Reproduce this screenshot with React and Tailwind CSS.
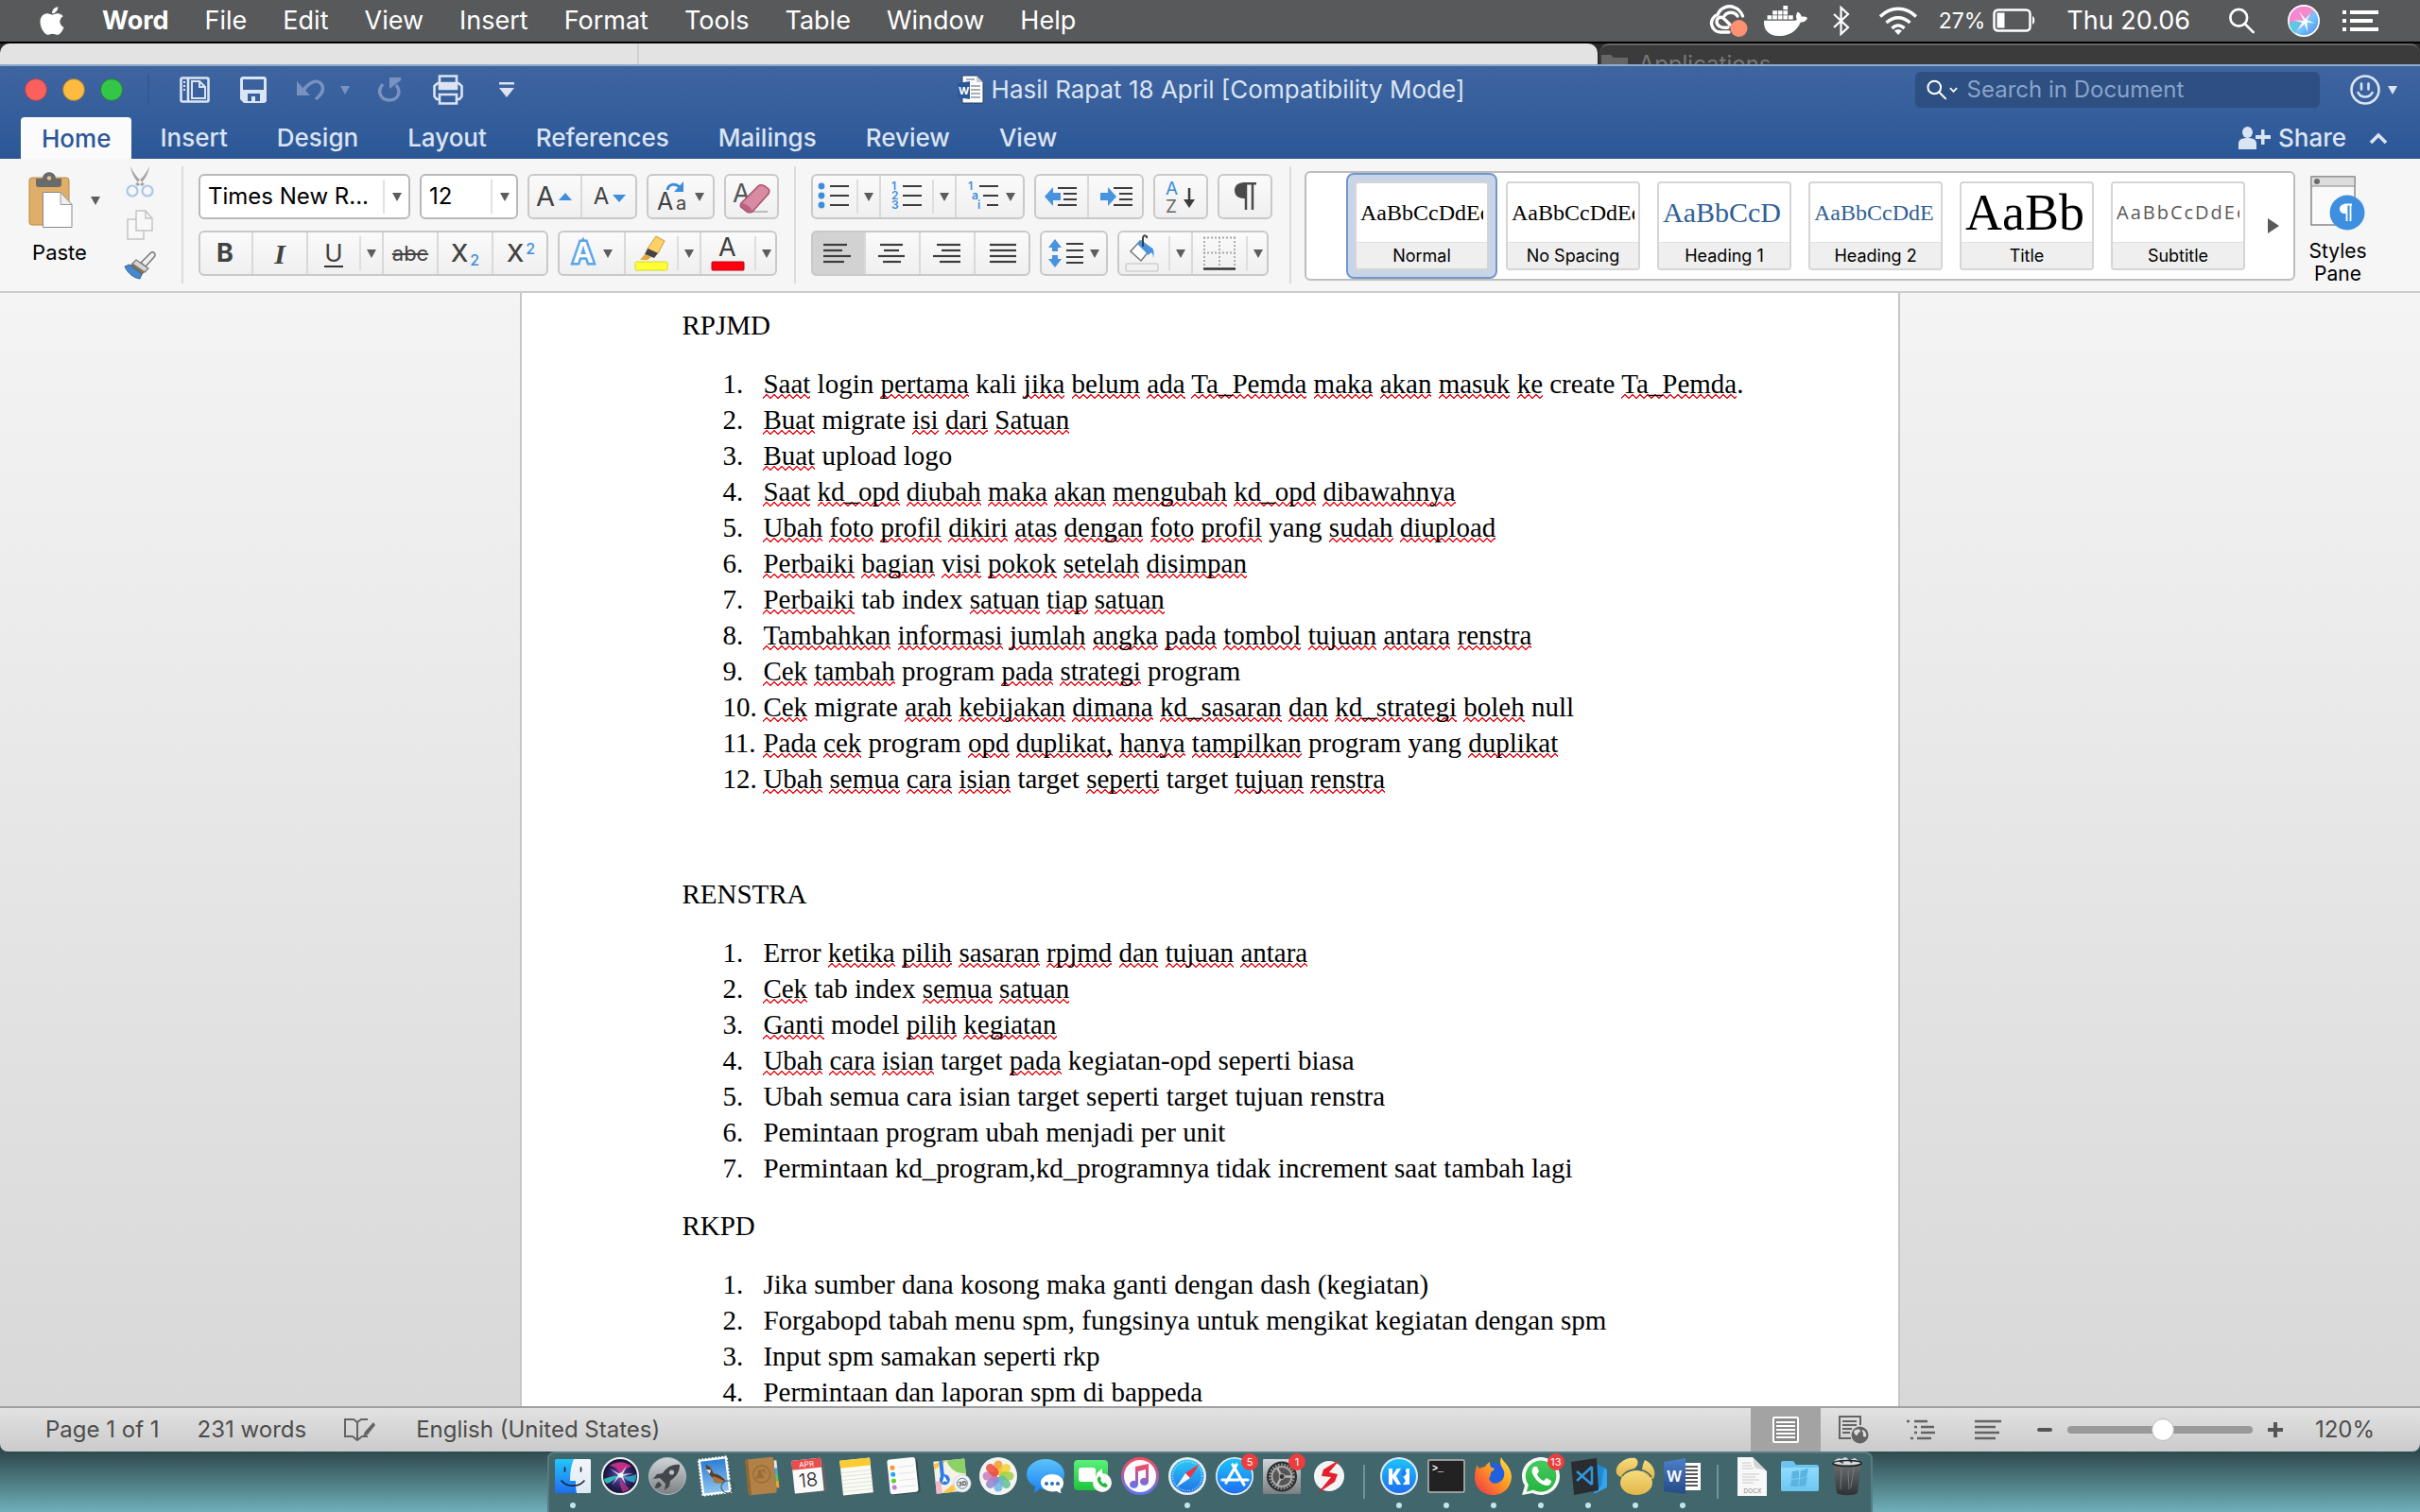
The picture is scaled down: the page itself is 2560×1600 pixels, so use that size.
import React from "react";
import { FaApple, FaDocker } from "react-icons/fa";

const UI = "font-['Inter','Liberation_Sans',sans-serif]";
const SERIF = "font-['Liberation_Serif',serif]";

/* ---------- macOS menu bar ---------- */

const menus = ["File", "Edit", "View", "Insert", "Format", "Tools", "Table", "Window", "Help"];

function CloudIcon() {
  return (
    <svg viewBox="0 0 42 36" className="h-9 w-[42px]" fill="none" stroke="#fff" strokeWidth="3.4" strokeLinecap="round">
      <path d="M21 30H12A9.500 9.500 0 0 1 9 11.500C12 4 20 1 27 4c4 1.500 7 5 8.500 9" />
      <path d="M20 25c-6 1-12-1-12-6 0-4 4-6 7-4l7 7" />
      <path d="M16 13c3-5 11-5 14 0" />
      <circle cx="31.500" cy="26" r="9" fill="#ff9173" stroke="none" />
    </svg>
  );
}

function BluetoothIcon() {
  return (
    <svg viewBox="0 0 20 32" className="h-8 w-5" fill="none" stroke="#fff" strokeWidth="2.200">
      <path d="M2 9l15 14-7.500 7V2L17 9 2 23" />
    </svg>
  );
}

function WifiIcon() {
  return (
    <svg viewBox="0 0 42 30" className="h-[30px] w-[42px]" fill="none" stroke="#fff" strokeWidth="3.400">
      <path d="M2 10.500c11-11 27-11 38 0M8.500 17c7.500-7 17.500-7 25 0M14.500 23c4-4 9-4 13 0" />
      <path d="M17 25.500l4 4.500 4-4.500c-2.500-2-5.500-2-8 0z" fill="#fff" stroke="none" />
    </svg>
  );
}

function BatteryIcon() {
  return (
    <svg viewBox="0 0 46 26" className="h-[26px] w-[46px]">
      <rect x="1.500" y="1.500" width="38" height="22" rx="4" fill="none" stroke="#fff" strokeWidth="2.500" />
      <rect x="4.500" y="4.500" width="8" height="16" fill="#fff" />
      <path d="M42 8c3 1 3 8 0 9z" fill="#fff" />
    </svg>
  );
}

function SiriLight({ className }) {
  return (
    <svg viewBox="0 0 40 40" className={className}>
      <defs>
        <linearGradient id="siriL" x1="0" y1="0" x2="1" y2="1">
          <stop offset="0" stopColor="#d98bea" />
          <stop offset=".4" stopColor="#ff86c4" />
          <stop offset=".6" stopColor="#6fc6ff" />
          <stop offset="1" stopColor="#5a7be8" />
        </linearGradient>
      </defs>
      <circle cx="20" cy="20" r="19" fill="url(#siriL)" stroke="#fff" strokeWidth="2" />
      <path d="M2 22c8-2 12-3 18-2-5 4-8 9-10 16C5 33 2 28 2 22z" fill="#3fd3e8" opacity=".8" />
      <path d="M20 20l-6-12 8 10 7-8-5 9 10 4-10-1 1 12-4-10-9 8 6-10-11-3z" fill="#fff" opacity=".95" />
    </svg>
  );
}

function SiriDark({ className }) {
  return (
    <svg viewBox="0 0 40 40" className={className}>
      <defs>
        <radialGradient id="siriD" cx=".5" cy=".5" r=".5">
          <stop offset="0" stopColor="#6a4fb8" />
          <stop offset=".6" stopColor="#2b2460" />
          <stop offset="1" stopColor="#140f2e" />
        </radialGradient>
      </defs>
      <circle cx="20" cy="20" r="19" fill="url(#siriD)" stroke="#f1f1f5" strokeWidth="2" />
      <path d="M9 9C16 4 26 4 32 10c-5 1-9 4-11 9-2-5-6-9-12-10z" fill="#d8308a" opacity=".85" />
      <path d="M3 23c6-2 11-4 17-3-5 2-8 6-14 8-2-1-3-3-3-5z" fill="#2fd0c4" opacity=".85" />
      <path d="M22 20c6 1 10 0 15-2 0 4 0 6-2 9-5-1-9-3-13-7z" fill="#2fb6d8" opacity=".8" />
      <path d="M20 21c-1 6 0 11 3 16 3-1 5-2 7-4-5-3-8-7-10-12z" fill="#c8368f" opacity=".7" />
      <path d="M20 20l-9 10 7-11-9-7 11 6 7-9-4 9 11-1-11 3 3 9z" fill="#e9f6ff" opacity=".85" />
      <circle cx="20.500" cy="19" r="2.600" fill="#fff" />
    </svg>
  );
}

function Magnifier({ className }) {
  return (
    <svg viewBox="0 0 30 30" className={className} fill="none" stroke="currentColor" strokeWidth="2.800" strokeLinecap="round">
      <circle cx="11.500" cy="11.500" r="9.500" />
      <path d="M18.500 18.500L28 28" />
    </svg>
  );
}

function MenuBar() {
  return (
    <header className="flex h-[46px] shrink-0 items-center border-b-2 border-black bg-[#57595b] pl-10 pr-[44px] text-[27px] text-white">
      <button type="button" aria-label="Apple menu" className="mr-[38px] flex w-[30px] justify-center">
        <FaApple className="h-[34px] w-[34px]" />
      </button>
      <nav className="flex items-center gap-[38px]">
        <button type="button" className="font-bold">Word</button>
        {menus.map((m) => (
          <button type="button" key={m}>{m}</button>
        ))}
      </nav>
      <div className="ml-auto flex items-center">
        <CloudIcon />
        <FaDocker className="ml-4 h-10 w-[46px]" />
        <span className="ml-[26px]"><BluetoothIcon /></span>
        <span className="ml-[29px]"><WifiIcon /></span>
        <span className="ml-[22px] text-[23px]">27%</span>
        <span className="ml-2"><BatteryIcon /></span>
        <span className="ml-[32px]">Thu 20.06</span>
        <Magnifier className="ml-[40px] h-7 w-[29px]" />
        <SiriLight className="ml-[34px] h-[34px] w-[34px]" />
        <svg viewBox="0 0 38 22" className="ml-[24px] h-[22px] w-[38px]" fill="#fff">
          <path d="M0 0h4v4H0zM8 0h30v4H8zM0 9h4v4H0zM8 9h24v4H8zM0 18h4v4H0zM8 18h30v4H8z" />
        </svg>
      </div>
    </header>
  );
}

function BackgroundWindows() {
  return (
    <div className="flex h-[22px] shrink-0 overflow-hidden bg-[#2b2b2b]">
      <div className="flex w-[66%] rounded-t-[10px] bg-[#e3e3e3]">
        <div className="w-[40%] border-r-2 border-[#d0d0d0]" />
      </div>
      <div className="ml-0.5 flex flex-1 items-start gap-3 rounded-t-[10px] border-t-2 border-[#666] bg-[#3b3b3b] pl-0.5 pt-1.5 text-[24px] leading-[28px] text-[#777]">
        <svg viewBox="0 0 28 22" className="mt-0.5 h-[22px] w-7 fill-[#666]"><path d="M0 2h10l3 3h15v17H0z" /></svg>
        <span>Applications</span>
      </div>
    </div>
  );
}

/* ---------- Word title bar ---------- */

function Caret({ className = "fill-[#5d5d5d]" }) {
  return (
    <svg viewBox="0 0 10 9" className={`h-[9px] w-[10px] shrink-0 ${className}`}>
      <path d="M0 0h10L5 9z" />
    </svg>
  );
}

function TitleBar() {
  return (
    <div className="grid grid-cols-[1fr_auto_1fr] items-center pl-[26px] pr-6 pt-1.5 text-[#dbe4f2]">
      <div className="flex items-center">
        <div className="flex gap-4">
          <button type="button" aria-label="Close" className="h-6 w-6 rounded-full border border-[#a8474f] bg-[#fc605c]" />
          <button type="button" aria-label="Minimize" className="h-6 w-6 rounded-full border border-[#9a7a3c] bg-[#fdbc40]" />
          <button type="button" aria-label="Zoom" className="h-6 w-6 rounded-full border border-[#24803c] bg-[#33c748]" />
        </div>
        <div className="ml-[26px] h-8 w-0.5 bg-[#355a92]" />
        <button type="button" aria-label="Sidebar" className="ml-8">
          <svg viewBox="0 0 32 28" className="h-7 w-8" fill="none" stroke="currentColor" strokeWidth="2.600">
            <rect x="1.500" y="1.500" width="29" height="25" rx="1.500" />
            <path d="M9 2v24" />
            <path d="M5 5v12" strokeWidth="2" strokeDasharray="2 2" />
            <path d="M13 5h8l6 6v12H13zM21 5v6h6" strokeWidth="2" />
          </svg>
        </button>
        <button type="button" aria-label="Save" className="ml-8">
          <svg viewBox="0 0 28 28" className="h-7 w-7">
            <path fill="currentColor" fillRule="evenodd" d="M2 0h24l2 2v24l-2 2H4l-4-4V2zm1 3v11h22V3zM8 18v8h4v-5h4v5h5v-8z" />
          </svg>
        </button>
        <button type="button" aria-label="Undo" className="ml-8 text-[#7893c0]">
          <svg viewBox="0 0 30 24" className="h-6 w-[30px]" fill="none" stroke="currentColor" strokeWidth="3.400">
            <path d="M6 14C14 2 22 1 26 6c4 6-1 12-6 16" />
            <path d="M0 3v15h14z" fill="currentColor" stroke="none" />
          </svg>
        </button>
        <Caret className="ml-4 fill-[#7893c0]" />
        <button type="button" aria-label="Repeat" className="ml-[30px] text-[#7893c0]">
          <svg viewBox="0 0 24 26" className="h-[26px] w-6" fill="none" stroke="currentColor" strokeWidth="3.400">
            <path d="M5 7C-2 15 3 24 12 24c9 0 13-9 7-16" />
            <path d="M12 0h12v3l-12 9z" fill="currentColor" stroke="none" />
          </svg>
        </button>
        <button type="button" aria-label="Print" className="ml-[34px]">
          <svg viewBox="0 0 32 32" className="h-8 w-8" fill="none" stroke="currentColor" strokeWidth="2.600">
            <path d="M7 10V1.500h18V10" />
            <path d="M7 26H4l-2.500-3V12L5 9h22l3.500 3v11L28 26h-3" />
            <path d="M7 10h18v5H7z" fill="currentColor" />
            <path d="M7 21h18v9.500H7z" />
          </svg>
        </button>
        <button type="button" aria-label="Customize toolbar" className="ml-[38px]">
          <svg viewBox="0 0 16 16" className="h-4 w-4 fill-current"><path d="M0 0h16v2.500H0zM0 6h16l-8 10z" /></svg>
        </button>
      </div>
      <h1 className="flex items-center gap-2 text-[26px] leading-8">
        <svg viewBox="0 0 28 32" className="h-8 w-7">
          <path d="M5 1h15l7 7v22H5z" fill="#fff" stroke="#2a3f66" />
          <path d="M20 1v7h7z" fill="#c8cdd6" />
          <path d="M14 12h10M14 16h10M14 20h10M14 24h10M9 5h9" stroke="#8b93a3" strokeWidth="1.500" />
          <path d="M0 9l13-2v19L0 24z" fill="#2b5797" />
          <text x="1" y="21" fontSize="11" fontWeight="700" fill="#fff" fontFamily="Inter">W</text>
        </svg>
        Hasil Rapat 18 April [Compatibility Mode]
      </h1>
      <div className="flex items-center justify-end">
        <label className="flex h-[38px] w-[428px] items-center rounded-md bg-[#2d4f81] pl-3 text-white">
          <Magnifier className="h-[22px] w-6" />
          <svg viewBox="0 0 10 6" className="ml-0.5 h-1.5 w-2.5" fill="none" stroke="#fff" strokeWidth="2"><path d="M1 1l4 4 4-4" /></svg>
          <input aria-label="Search in Document" placeholder="Search in Document" className="ml-2.5 w-full bg-transparent text-[24px] outline-none placeholder:text-[#8aa3cb]" />
        </label>
        <button type="button" aria-label="Feedback" className="ml-8 flex items-center gap-2">
          <svg viewBox="0 0 32 32" className="h-8 w-8" fill="none" stroke="currentColor" strokeWidth="2.600" strokeLinecap="round">
            <circle cx="16" cy="16" r="14.500" />
            <path d="M12 9.500v6M19.500 9.500v6M8.500 19c3 6 12 6 15 0" />
          </svg>
          <Caret className="fill-[#dbe4f2]" />
        </button>
      </div>
    </div>
  );
}

const tabs = ["Insert", "Design", "Layout", "References", "Mailings", "Review", "View"];

function TabRow() {
  return (
    <div className="mt-auto flex h-11 items-stretch justify-between border-b border-[#264f8b] pl-[22px] pr-[34px] text-[26px] font-medium text-[#dbe4f2]">
      <nav className="flex gap-2">
        <button type="button" className="-mb-px rounded-t bg-[#fbfbfb] px-[22px] text-[#2b5797]">Home</button>
        {tabs.map((t) => (
          <button type="button" key={t} className="px-[22px]">{t}</button>
        ))}
      </nav>
      <div className="flex items-center gap-6">
        <button type="button" className="flex items-center gap-2">
          <svg viewBox="0 0 34 24" className="h-6 w-[34px] fill-current">
            <ellipse cx="9.500" cy="6" rx="5.500" ry="6" />
            <path d="M0 24v-6c0-4 3-6 9.500-6s9.500 2 9.500 6v6zM24 3h3.500v6H34v4h-6.500v6H24v-6h-6V9h6z" />
          </svg>
          Share
        </button>
        <button type="button" aria-label="Collapse ribbon">
          <svg viewBox="0 0 20 12" className="h-3 w-5" fill="none" stroke="currentColor" strokeWidth="3.600"><path d="M2 11l8-8 8 8" /></svg>
        </button>
      </div>
    </div>
  );
}

/* ---------- Ribbon ---------- */

function Group({ children }) {
  return (
    <div className="flex h-12 items-stretch divide-x-2 divide-[#d9d9d9] rounded-md bg-gradient-to-b from-[#fbfbfb] to-[#efefef] text-[#424242] outline-2 -outline-offset-2 outline-[#c9c9c9]">
      {children}
    </div>
  );
}

function Btn({ label, children, wide, active }) {
  return (
    <button
      type="button"
      aria-label={label}
      className={`flex items-center justify-center gap-1.5 ${wide ? "w-[72px]" : "w-[58px]"} ${active ? "rounded-l-md bg-[#d2d2d2]" : ""}`}
    >
      {children}
      {wide && <Caret />}
    </button>
  );
}

function SplitBtn({ label, children, narrow }) {
  return (
    <div className={`flex items-center ${narrow ? "w-[74px]" : "w-20"}`}>
      <button type="button" aria-label={label} className="flex h-full flex-1 items-center justify-center">{children}</button>
      <button type="button" aria-label={`${label} options`} className="flex h-9 w-6 items-center justify-center border-l-2 border-[#dedede]">
        <Caret />
      </button>
    </div>
  );
}

function Combo({ label, value, className }) {
  return (
    <div className={`flex h-12 items-center rounded-md border-2 border-[#b9b9b9] bg-white ${className}`}>
      <select aria-label={label} className="h-11 min-w-0 flex-1 appearance-none bg-transparent pl-2 text-[24px] text-black outline-none">
        <option>{value}</option>
      </select>
      <span className="flex h-9 w-[27px] items-center justify-center border-l-2 border-[#e2e2e2]"><Caret /></span>
    </div>
  );
}

function Divider() {
  return <div className="mt-2 h-[124px] w-0.5 shrink-0 bg-[#dcdcdc]" />;
}

function Lines({ rows }) {
  return (
    <svg viewBox="0 0 30 22" className="h-[22px] w-[30px]" stroke="#3c3c3c" strokeWidth="2.200">
      {rows.map(([a, b], i) => (
        <path key={i} d={`M${a} ${2 + i * 6}H${b}`} />
      ))}
    </svg>
  );
}

function PasteGroup() {
  return (
    <div className="flex pt-2">
      <div className="flex w-[130px] flex-col pt-1.5">
        <div className="flex items-center gap-[18px] pl-[30px]">
          <button type="button" aria-label="Paste clipboard">
            <svg viewBox="0 0 48 60" className="h-[60px] w-12">
              <rect x="1" y="6" width="42" height="50" rx="3" fill="#dfae68" stroke="#bb8845" />
              <path d="M8 7h7c0-9 14-9 14 0h6v6c0 2-1 3-3 3H11c-2 0-3-1-3-3z" fill="#6a6a6a" />
              <circle cx="22" cy="6.500" r="2.200" fill="#e9c48e" />
              <path d="M15.500 21.500H34l12 13v24H15.500z" fill="#fff" stroke="#8a8a8a" />
              <path d="M34 21.500v13h12z" fill="#eee" stroke="#9a9a9a" />
            </svg>
          </button>
          <Caret />
        </div>
        <span className="mt-[11px] w-[126px] text-center text-[22px] leading-7 text-black">Paste</span>
      </div>
      <div className="flex w-9 flex-col items-center justify-start gap-3">
        <button type="button" aria-label="Cut">
          <svg viewBox="0 0 30 34" className="h-[34px] w-[30px]" fill="none">
            <path d="M5 0c1 8 5 15 12 21l3-2C13 13 8 7 5 0zM25 0c-1 8-5 15-12 21l-3-2C17 13 22 7 25 0z" fill="#a5a5a5" />
            <circle cx="7" cy="26" r="5.500" stroke="#a9c7ea" strokeWidth="2.200" />
            <circle cx="23" cy="26" r="5.500" stroke="#a9c7ea" strokeWidth="2.200" />
          </svg>
        </button>
        <button type="button" aria-label="Copy">
          <svg viewBox="0 0 28 32" className="h-8 w-7" fill="#f8f8f8" stroke="#c4c4c4" strokeWidth="1.500">
            <path d="M1 10h11l6 7v14H1z" />
            <path d="M10 1h10l7 8v13H10zM20 1v8h7" />
          </svg>
        </button>
        <button type="button" aria-label="Format Painter">
          <svg viewBox="0 0 34 30" className="h-[30px] w-[34px]">
            <path d="M18 12L28 2c3-3 7 1 4 4L23 16z" fill="#f0f0f0" stroke="#777" strokeWidth="1.500" />
            <path d="M13 9l13 9-4 4L9 13z" fill="#d5d5d5" stroke="#777" strokeWidth="1.200" />
            <path d="M9 13l13 9-3 3L6 15z" fill="#8b6f52" />
            <path d="M6 14l13 10-2 5C10 28 4 23 1 16z" fill="#4a86cc" stroke="#35649d" />
          </svg>
        </button>
      </div>
    </div>
  );
}

function FontGroup() {
  return (
    <div className="flex flex-col gap-3 pt-4">
      <div className="flex gap-[10px]">
        <Combo label="Font" value="Times New R..." className="w-[224px]" />
        <Combo label="Font size" value="12" className="w-[104px]" />
        <Group>
          <Btn label="Grow font">
            <span className="flex items-center gap-1 text-[29px]">A<svg viewBox="0 0 14 8" className="h-2 w-3.5 fill-[#3f8ddb]"><path d="M7 0l7 8H0z" /></svg></span>
          </Btn>
          <Btn label="Shrink font">
            <span className="flex items-center gap-1 text-[24px]">A<svg viewBox="0 0 14 8" className="mt-1 h-2 w-3.5 fill-[#3f8ddb]"><path d="M0 0h14l-7 8z" /></svg></span>
          </Btn>
        </Group>
        <Group>
          <Btn label="Change case" wide>
            <svg viewBox="0 0 34 34" className="h-[34px] w-[34px]">
              <text x="0" y="31" fontSize="25" fontFamily="Inter" fill="#424242">A</text>
              <text x="20" y="31" fontSize="20" fontFamily="Inter" fill="#424242">a</text>
              <path d="M11 10C12 4 19 2 24 7" fill="none" stroke="#3f8ddb" strokeWidth="3" />
              <path d="M28 1v11H18z" fill="#3f8ddb" />
            </svg>
          </Btn>
        </Group>
        <Group>
          <Btn label="Clear formatting">
            <svg viewBox="0 0 42 38" className="h-[38px] w-[42px]">
              <text x="1" y="25" fontSize="27" fontFamily="Inter" fill="#555">A</text>
              <path d="M18 35h20" stroke="#bbb" strokeWidth="2" />
              <path d="M10 26L28 8c2-2 5-1 7 0l4 3c1 1 1 3 0 5L22 35c-2 1-4 1-6 0l-5-4c-2-1-2-3-1-5z" fill="#d98ba3" stroke="#a9506c" strokeWidth="1.500" />
              <path d="M10 26c4 0 11 4 12 9-2 1-4 1-6 0l-5-4c-2-1-2-3-1-5z" fill="#b9617f" />
            </svg>
          </Btn>
        </Group>
      </div>
      <div className="flex gap-[10px]">
        <Group>
          <Btn label="Bold"><b className="text-[27px]">B</b></Btn>
          <Btn label="Italic"><i className="font-['Liberation_Serif',serif] text-[30px] font-bold">I</i></Btn>
          <SplitBtn label="Underline"><span className="border-b-2 border-[#333] text-[26px] leading-[27px]">U</span></SplitBtn>
          <Btn label="Strikethrough"><s className="text-[22px]">abc</s></Btn>
          <Btn label="Subscript"><span className="text-[26px] font-medium leading-8">X<sub className="ml-0.5 text-[16px] text-[#3f8ddb]">2</sub></span></Btn>
          <Btn label="Superscript"><span className="text-[26px] font-medium leading-8">X<sup className="ml-0.5 text-[16px] text-[#3f8ddb]">2</sup></span></Btn>
        </Group>
        <Group>
          <Btn label="Text effects" wide>
            <svg viewBox="0 0 30 34" className="h-[34px] w-[30px]">
              <text x="4" y="27" fontSize="30" fontWeight="600" fontFamily="Inter" fill="#fff" stroke="#58a5ea" strokeWidth="5" paintOrder="stroke">A</text>
            </svg>
          </Btn>
          <SplitBtn label="Highlight color">
            <svg viewBox="0 0 36 38" className="h-[38px] w-9">
              <rect x="1" y="28" width="34" height="9" rx="1.500" fill="#ffff33" stroke="#d5d52c" />
              <path d="M14 14l9-13 9 5-7 13z" fill="#ffd166" stroke="#c79a3a" />
              <path d="M14 14l11 5-4 5-10-4z" fill="#444" />
              <path d="M11 20l7 3-4 3H6z" fill="#e0a93d" />
            </svg>
          </SplitBtn>
          <SplitBtn label="Font color">
            <svg viewBox="0 0 36 38" className="h-[38px] w-9">
              <text x="8" y="22" fontSize="27" fontFamily="Inter" fill="#3c3c3c">A</text>
              <rect x="1" y="28" width="34" height="9" rx="1" fill="#ff0010" stroke="#c4000c" />
            </svg>
          </SplitBtn>
        </Group>
      </div>
    </div>
  );
}

function ListIcon({ marks }) {
  return (
    <svg viewBox="0 0 36 32" className="h-8 w-9">
      {marks.map((m, i) => (
        <g key={i}>
          {m.t ? (
            <text x={m.x} y={9 + i * 10} fontSize="12" fontWeight="600" fontFamily="Inter" fill="#3f8ddb">{m.t}</text>
          ) : (
            <circle cx="5" cy={5 + i * 10} r="3.400" fill="#3f8ddb" />
          )}
          <path d={`M${m.l} ${5 + i * 10}H34`} stroke="#3c3c3c" strokeWidth="2.200" />
        </g>
      ))}
    </svg>
  );
}

const bulletMarks = [{ l: 14 }, { l: 14 }, { l: 14 }];
const numberMarks = [{ t: "1", x: 2, l: 14 }, { t: "2", x: 2, l: 14 }, { t: "3", x: 2, l: 14 }];
const levelMarks = [{ t: "1", x: 2, l: 14 }, { t: "a", x: 6, l: 18 }, { t: "i", x: 12, l: 22 }];

function IndentIcon({ flip }) {
  return (
    <svg viewBox="0 0 34 24" className="h-6 w-[34px]">
      <path d={flip ? "M17 12L8 2v6H0v8h8v6z" : "M0 12L9 2v6h8v8H9v6z"} fill="#4793e0" />
      <path d="M14 3h20M20 9h14M20 15h14M14 21h20" stroke="#3c3c3c" strokeWidth="2.200" />
    </svg>
  );
}

function ParagraphGroup() {
  return (
    <div className="flex flex-col gap-3 pt-4">
      <div className="flex gap-[10px]">
        <Group>
          <SplitBtn label="Bullets" narrow><ListIcon marks={bulletMarks} /></SplitBtn>
          <SplitBtn label="Numbering"><ListIcon marks={numberMarks} /></SplitBtn>
          <Btn label="Multilevel list" wide><ListIcon marks={levelMarks} /></Btn>
        </Group>
        <Group>
          <Btn label="Decrease indent"><IndentIcon /></Btn>
          <Btn label="Increase indent"><IndentIcon flip /></Btn>
        </Group>
        <Group>
          <Btn label="Sort">
            <svg viewBox="0 0 34 36" className="h-9 w-[34px]">
              <text x="1" y="16" fontSize="19" fontFamily="Inter" fill="#3f8ddb">A</text>
              <text x="1" y="35" fontSize="19" fontFamily="Inter" fill="#666">Z</text>
              <path d="M26 9v14" stroke="#3c3c3c" strokeWidth="2.500" />
              <path d="M20 21h12l-6 9z" fill="#3c3c3c" />
            </svg>
          </Btn>
        </Group>
        <Group>
          <Btn label="Show marks">
            <svg viewBox="0 0 24 30" className="h-[30px] w-6">
              <path d="M12 0C4 0 1 4 1 8.500S4 17 11 17h1z" fill="#4a4a4a" />
              <path d="M10 1.200h14M13 1v28M20 1v28" stroke="#4a4a4a" strokeWidth="2.500" />
            </svg>
          </Btn>
        </Group>
      </div>
      <div className="flex gap-[10px]">
        <Group>
          <Btn label="Align left" active><Lines rows={[[0, 25], [0, 20], [0, 29], [0, 22]]} /></Btn>
          <Btn label="Center"><Lines rows={[[2, 26], [6, 22], [0, 28], [5, 24]]} /></Btn>
          <Btn label="Align right"><Lines rows={[[4, 29], [9, 29], [0, 29], [7, 29]]} /></Btn>
          <Btn label="Justify"><Lines rows={[[1, 29], [1, 29], [1, 29], [1, 29]]} /></Btn>
        </Group>
        <Group>
          <Btn label="Line spacing" wide>
            <svg viewBox="0 0 38 30" className="h-[30px] w-[38px]">
              <path d="M7 0l7 9h-4v4H4V9H0zM7 30l7-9h-4v-4H4v4H0z" fill="#4793e0" />
              <path d="M19 5h18M19 12h18M19 19h18M19 25h18" stroke="#3c3c3c" strokeWidth="2.200" />
            </svg>
          </Btn>
        </Group>
        <Group>
          <SplitBtn label="Shading">
            <svg viewBox="0 0 38 40" className="h-10 w-[38px]">
              <path d="M16 7l10 10-9 11L6 18z" fill="#fff" stroke="#777" strokeWidth="1.500" />
              <path d="M13 10l12 12c3-5 5-2 5 4 1-6 1-11-2-12L17 6z" fill="#4793e0" />
              <path d="M19 13V4c0-4 5-3 4 0" fill="none" stroke="#3c3c3c" strokeWidth="2" />
              <rect x="1" y="31" width="34" height="8" rx="1.500" fill="#f1f1f1" stroke="#cfcfcf" strokeWidth="1.500" />
            </svg>
          </SplitBtn>
          <SplitBtn label="Borders">
            <svg viewBox="0 0 36 36" className="h-9 w-9" fill="none">
              <path d="M1 1.500h34M1 17.500h34M2 1v30M18 1v30M34 1v30" stroke="#a8a8a8" strokeWidth="1.800" strokeDasharray="2 2" />
              <path d="M1 34.500h34" stroke="#333" strokeWidth="2.500" />
            </svg>
          </SplitBtn>
        </Group>
      </div>
    </div>
  );
}

const styleCards = [
  { name: "Normal", sample: "AaBbCcDdEe", cls: "text-[24px] text-black" },
  { name: "No Spacing", sample: "AaBbCcDdEe", cls: "text-[24px] text-black" },
  { name: "Heading 1", sample: "AaBbCcD", cls: "text-[30px] text-[#2f6096]" },
  { name: "Heading 2", sample: "AaBbCcDdE", cls: "text-[24px] text-[#2f6096]" },
  { name: "Title", sample: "AaBb", cls: "text-[54px] text-black" },
  { name: "Subtitle", sample: "AaBbCcDdEe", cls: "font-['Open_Sans',sans-serif] text-[20px] tracking-widest text-[#5a5a5a]" },
];

function StyleGallery() {
  return (
    <div className="mt-[13px] flex h-[116px] min-w-0 flex-1 items-center justify-end rounded-md border-2 border-[#bdbdbd] bg-white">
      {styleCards.map((c, i) => (
        <button
          type="button"
          key={c.name}
          className={`rounded-lg border-2 p-[7px] ${i === 0 ? "border-[#7298c9] bg-[#c8d5e8]" : "border-transparent"}`}
        >
          <span className="flex h-[94px] w-[142px] flex-col overflow-hidden rounded border-2 border-[#d5d5d5] bg-white">
            <span className={`mx-1 flex h-[62px] items-center overflow-hidden whitespace-nowrap leading-[62px] ${SERIF} ${c.cls}`}>{c.sample}</span>
            <span className="flex flex-1 items-center justify-center border-t border-[#e2e2e2] bg-[#efefef] text-[18px] leading-6 text-black">{c.name}</span>
          </span>
        </button>
      ))}
      <button type="button" aria-label="More styles" className="flex w-[42px] justify-center">
        <svg viewBox="0 0 12 16" className="h-4 w-3 fill-[#5a5a5a]"><path d="M0 0l12 8-12 8z" /></svg>
      </button>
    </div>
  );
}

function Ribbon() {
  return (
    <div className="flex h-[142px] shrink-0 items-start border-b-2 border-[#cbcbcb] bg-[#f6f6f6] pr-[58px]">
      <PasteGroup />
      <div className="ml-[26px]"><Divider /></div>
      <div className="ml-4"><FontGroup /></div>
      <div className="ml-4"><Divider /></div>
      <div className="ml-4"><ParagraphGroup /></div>
      <div className="ml-[18px]"><Divider /></div>
      <div className="ml-3.5 flex min-w-0 flex-1"><StyleGallery /></div>
      <button type="button" className="ml-4 flex w-[58px] flex-col items-center pt-[18px] text-[21px] leading-6 text-black">
        <svg viewBox="0 0 58 58" className="mb-2.5 h-[58px] w-[58px]">
          <path d="M1 1h46v51H1z" fill="#fafafa" stroke="#888" strokeWidth="1.500" />
          <path d="M1 1h46v10H1z" fill="#dcdcdc" stroke="#888" />
          <circle cx="7" cy="6" r="3" fill="#6b6b6b" />
          <circle cx="39" cy="39" r="18.500" fill="#3f8fe0" />
          <path d="M38 30c-5 0-7 2-7 5s2 5 6 5h1z" fill="#fff" />
          <path d="M36 30.500h8M38.500 30v18M42.500 30v18" stroke="#fff" strokeWidth="1.800" />
        </svg>
        Styles Pane
      </button>
    </div>
  );
}

/* ---------- Document ---------- */

const dictionary = new Set([
  "login", "kali", "create", "migrate", "upload", "logo", "yang", "program",
  "tab", "index", "null", "target", "Error", "model",
]);

const sections = [
  {
    title: "RPJMD",
    items: [
      ["Saat login pertama kali jika belum ada Ta_Pemda maka akan masuk ke create Ta_Pemda", "."],
      ["Buat migrate isi dari Satuan"],
      ["Buat upload logo"],
      ["Saat kd_opd diubah maka akan mengubah kd_opd dibawahnya"],
      ["Ubah foto profil dikiri atas dengan foto profil yang sudah diupload"],
      ["Perbaiki bagian visi pokok setelah disimpan"],
      ["Perbaiki tab index satuan tiap satuan"],
      ["Tambahkan informasi jumlah angka pada tombol tujuan antara renstra"],
      ["Cek tambah program pada strategi program"],
      ["Cek migrate arah kebijakan dimana kd_sasaran dan kd_strategi boleh null"],
      ["Pada cek program opd duplikat, hanya tampilkan program yang duplikat"],
      ["Ubah semua cara isian target seperti target tujuan renstra"],
    ],
  },
  {
    title: "RENSTRA",
    items: [
      ["Error ketika pilih sasaran rpjmd dan tujuan antara"],
      ["Cek tab index semua satuan"],
      ["Ganti model pilih kegiatan"],
      ["Ubah cara isian target pada", " kegiatan-opd seperti biasa"],
      ["", "Ubah semua cara isian target seperti target tujuan renstra"],
      ["", "Pemintaan program ubah menjadi per unit"],
      ["", "Permintaan kd_program,kd_programnya tidak increment saat tambah lagi"],
    ],
  },
  {
    title: "RKPD",
    items: [
      ["", "Jika sumber dana kosong maka ganti dengan dash (kegiatan)"],
      ["", "Forgabopd tabah menu spm, fungsinya untuk mengikat kegiatan dengan spm"],
      ["", "Input spm samakan seperti rkp"],
      ["", "Permintaan dan laporan spm di bappeda"],
    ],
  },
];

/* Zigzag underline: two diagonal strokes per 8px tile along the text's lower edge. */
const SQUIGGLE =
  "bg-[linear-gradient(135deg,transparent_26%,#ee1c25_29%,#ee1c25_40%,transparent_43%),linear-gradient(45deg,transparent_57%,#ee1c25_60%,#ee1c25_71%,transparent_74%)] bg-[length:8px_5px] bg-repeat-x bg-bottom-left";

function Checked({ text }) {
  if (!text) return null;
  return text.split(" ").map((word, i) => (
    <React.Fragment key={i}>
      {i > 0 && " "}
      {dictionary.has(word) ? word : <span className={SQUIGGLE}>{word}</span>}
    </React.Fragment>
  ));
}

function Document() {
  return (
    <main className="flex min-h-0 flex-1 justify-center overflow-hidden bg-gradient-to-b from-[#f4f4f4] to-[#d8d8d8]">
      <article className={`w-[57%] border-x-2 border-[#c6c6c6] bg-white pl-[169px] pt-[15px] text-[29px] leading-[38px] text-black ${SERIF}`}>
        {sections.map((s, n) => (
          <section key={s.title} className={n === 1 ? "mt-[84px]" : n === 2 ? "mt-[23px]" : ""}>
            <h2>{s.title}</h2>
            <ol className="mt-6 pl-[43px]">
              {s.items.map(([checked, rest], i) => (
                <li key={i} className="flex whitespace-nowrap">
                  <span className="w-[43px] shrink-0">{i + 1}.</span>
                  <span><Checked text={checked} />{rest}</span>
                </li>
              ))}
            </ol>
          </section>
        ))}
      </article>
    </main>
  );
}

/* ---------- Status bar ---------- */

function StatusBar() {
  return (
    <footer className="flex h-[48px] shrink-0 items-center border-t-2 border-[#a0a0a0] bg-gradient-to-b from-[#e2e2e2] to-[#cbcbcb] pl-12 pr-12 text-[24px] text-[#4c4c4c]">
      <span>Page 1 of 1</span>
      <span className="ml-10">231 words</span>
      <button type="button" aria-label="Proofing" className="ml-10">
        <svg viewBox="0 0 34 26" className="h-[26px] w-[34px]" fill="none" stroke="#636363" strokeWidth="2">
          <path d="M25 2h-7l-4 3-4-3H1v18h8l5 4 5-4h6M14 5v18" />
          <path d="M31 5l-9 10-2 5 5-2 8-10z" fill="#636363" stroke="none" />
        </svg>
      </button>
      <button type="button" className="ml-[42px]">English (United States)</button>
      <div className="ml-auto flex h-full items-center">
        <button type="button" aria-label="Print layout" className="flex h-full w-[74px] items-center justify-center bg-[#a3a3a3]">
          <svg viewBox="0 0 28 28" className="h-7 w-7" stroke="#fff" strokeWidth="2" fill="#8a8a8a">
            <rect x="1" y="1" width="26" height="26" rx="1" />
            <path d="M4 6h20M4 10h20M4 14h20M4 18h20M4 22h20" />
          </svg>
        </button>
        <button type="button" aria-label="Web layout" className="ml-[18px]">
          <svg viewBox="0 0 34 30" className="h-[30px] w-[34px]" fill="none" stroke="#636363" strokeWidth="2">
            <path d="M14 24H2V1h22v9M5 6h15M5 10h15M5 14h10M5 18h8" />
            <circle cx="23.500" cy="20.500" r="9" fill="#636363" stroke="none" />
            <path d="M17 17c2-3 6-3 7-1 0 2-3 2-3 4s-3 1-4-3zM26 15c3 1 5 4 4 7-2 2-4-1-3-3 0-2-2-2-1-4z" fill="#ddd" stroke="none" />
          </svg>
        </button>
        <button type="button" aria-label="Outline" className="ml-[39px]">
          <svg viewBox="0 0 30 24" className="h-6 w-[30px]" stroke="#636363" strokeWidth="2.400">
            <path d="M0 3h3M8 3h14M8 9h3M15 9h14M8 15h3M15 15h15M4 21h3M11 21h15" />
          </svg>
        </button>
        <button type="button" aria-label="Draft" className="ml-[42px]">
          <svg viewBox="0 0 28 24" className="h-6 w-7" stroke="#636363" strokeWidth="2.400">
            <path d="M0 3h28M0 9h22M0 15h26M0 21h22" />
          </svg>
        </button>
        <button type="button" aria-label="Zoom out" className="ml-[38px] h-1 w-4 rounded-sm bg-[#555]" />
        <input
          type="range"
          aria-label="Zoom"
          min="0"
          max="100"
          defaultValue="52"
          className="ml-4 h-2 w-[196px] appearance-none rounded-full bg-[#999] [&::-webkit-slider-thumb]:h-6 [&::-webkit-slider-thumb]:w-6 [&::-webkit-slider-thumb]:appearance-none [&::-webkit-slider-thumb]:rounded-full [&::-webkit-slider-thumb]:border [&::-webkit-slider-thumb]:border-[#b5b5b5] [&::-webkit-slider-thumb]:bg-white"
        />
        <button type="button" aria-label="Zoom in" className="ml-4">
          <svg viewBox="0 0 16 16" className="h-4 w-4 fill-[#555]"><path d="M6 0h4v6h6v4h-6v6H6v-6H0V6h6z" /></svg>
        </button>
        <span className="ml-[34px]">120%</span>
      </div>
    </footer>
  );
}

/* ---------- Dock ---------- */

function Gradients() {
  const list = [
    ["gFinder", "#22c7fb", "#1f6df0"],
    ["gFace", "#f2f6fa", "#dfe9f2"],
    ["gGray", "#cfd6da", "#7c7f82"],
    ["gSky", "#2f7fd6", "#8cc4ee"],
    ["gMsg", "#5cc3fb", "#1c82f5"],
    ["gGreen", "#5bf07a", "#1fc43c"],
    ["gTunes", "#fb4a5c", "#5f74f2"],
    ["gSafari", "#2ccaf7", "#1e73e4"],
    ["gStore", "#1cc3fb", "#1e6ef0"],
    ["gFox", "#ffd83a", "#f5304a"],
    ["gGold", "#f7dc7e", "#e2b64a"],
    ["gWord", "#4d7fc9", "#234a86"],
    ["gFolder", "#8fdcff", "#6cc6f0"],
    ["gBin", "#6b6f72", "#2f3234"],
  ];
  return (
    <svg className="absolute h-0 w-0" aria-hidden="true">
      <defs>
        {list.map(([id, a, b]) => (
          <linearGradient key={id} id={id} x1="0" y1="0" x2="0" y2="1">
            <stop offset="0" stopColor={a} />
            <stop offset="1" stopColor={b} />
          </linearGradient>
        ))}
        <linearGradient id="gFlame" x1="1" y1="0" x2="0" y2="1">
          <stop offset="0" stopColor="#ffe84d" />
          <stop offset=".45" stopColor="#ff9a1f" />
          <stop offset="1" stopColor="#f22c50" />
        </linearGradient>
      </defs>
    </svg>
  );
}

const petals = ["#f79a2e", "#f2d02f", "#9fcf47", "#5fbf8f", "#6fb0e6", "#8e86cc", "#c77bb8", "#ee4b3a"];

const art = {
  Finder: (
    <>
      <rect x="1" y="2" width="38" height="36" rx="1.500" fill="url(#gFinder)" />
      <path d="M21 2h16.500a1.500 1.500 0 0 1 1.500 1.500v33a1.500 1.500 0 0 1-1.500 1.500H24c-1-5-1-9-1-13h-6C17 16 18 9 21 2z" fill="url(#gFace)" />
      <path d="M11.500 11v4M28.500 11v4M8 25c6 7 18 7 24 0" fill="none" stroke="#152238" strokeWidth="1.600" strokeLinecap="round" />
    </>
  ),
  Launchpad: (
    <>
      <circle cx="20" cy="20" r="19.500" fill="url(#gGray)" stroke="#b4bcc0" />
      <path d="M33 8c-8-1-14 3-18 9l-6 1-4 5 7-1 6 6-1 7 5-4 1-6c6-4 10-9 10-17zM11 26c-3 1-4 5-4 7 3 0 6-1 7-4z" fill="#43474b" />
      <circle cx="24.500" cy="16" r="2.600" fill="#b9bfc2" />
    </>
  ),
  Mail: (
    <g transform="rotate(-7 20 20)">
      <rect x="5" y="1" width="30" height="38" fill="#fff" stroke="#fff" strokeWidth="2" strokeDasharray="2 1.500" />
      <rect x="7" y="3" width="26" height="34" fill="url(#gSky)" />
      <path d="M12 7c4 2 6 5 7 10 5 1 8 4 12 9-5 1-10-1-13-4-4-4-6-9-6-15z" fill="#5d3d22" />
      <path d="M18 20c4 1 8 4 12 7-4 2-8 2-12-1z" fill="#a87643" />
      <path d="M12 12l5 1-2 4z" fill="#eee" />
      <circle cx="32" cy="33" r="6.500" fill="none" stroke="#35555a" strokeWidth="1" />
    </g>
  ),
  Contacts: (
    <g transform="rotate(-6 20 20)">
      <path d="M34 5h3v9h-3z" fill="#e8e8e8" /><path d="M34 13h3v8h-3z" fill="#4aa7e0" /><path d="M34 20h3v8h-3z" fill="#5cc84b" /><path d="M34 27h3v7h-3z" fill="#f3a32f" />
      <rect x="4" y="1" width="30" height="38" rx="2" fill="#b28147" />
      <path d="M4 3c0-1 1-2 2-2h1v38H6c-1 0-2-1-2-2z" fill="#94672f" />
      <circle cx="20" cy="18" r="9" fill="none" stroke="#996c38" strokeWidth="1.500" />
      <path d="M13 22c1-3 3-3 3-5s0-4 2-4 2 2 2 4 2 3 3 5M20 14c1-2 4-2 4 1s0 4 3 6" fill="#996c38" />
    </g>
  ),
  Calendar: (
    <g transform="rotate(-6 20 20)">
      <rect x="6" y="7" width="32" height="31" rx="1" fill="#5c6265" />
      <rect x="3" y="2" width="31" height="35" rx="1" fill="#fafafa" />
      <path d="M3 3c0-1 0-1 1-1h29c1 0 1 0 1 1v9H3z" fill="#e84c4c" />
      <text x="18.500" y="10" fontSize="8" textAnchor="middle" fontFamily="Inter" fill="#fff">APR</text>
      <text x="18.500" y="31" fontSize="20" textAnchor="middle" fontFamily="Inter" fontWeight="300" fill="#222">18</text>
    </g>
  ),
  Notes: (
    <g transform="rotate(-6 20 20)">
      <rect x="4" y="2" width="32" height="37" fill="#fbfbf5" />
      <path d="M4 2h32v8H4z" fill="#fbcb33" />
      <path d="M4 15h32M4 19h32M4 23h32M4 27h32M4 31h32M4 35h32" stroke="#dcdcd6" strokeWidth=".8" />
    </g>
  ),
  Reminders: (
    <g transform="rotate(-6 20 20)">
      <rect x="6" y="3" width="30" height="36" rx="3" fill="#38474b" />
      <rect x="4" y="1" width="30" height="37" rx="3" fill="#fbfbfb" />
      <circle cx="9" cy="10" r="2.500" fill="#ff9526" /><circle cx="9" cy="17" r="2.500" fill="#1fa5f5" /><circle cx="9" cy="24" r="2.500" fill="#5bd12e" /><circle cx="9" cy="31" r="2.500" fill="#c37be0" />
      <path d="M15 10h17M15 17h17M15 24h17M15 31h17" stroke="#e3e3e3" />
    </g>
  ),
  Maps: (
    <g transform="rotate(-6 20 20)">
      <rect x="3" y="3" width="33" height="34" fill="#f5f1e6" />
      <path d="M17 3h19v16C26 18 19 12 17 3z" fill="#8ed267" />
      <path d="M3 24h6v13H3z" fill="#f5b8c4" />
      <path d="M9 37L36 19v7L20 37zM3 6l10-3h4L3 12z" fill="#fac64a" />
      <path d="M11 3v20" stroke="#2f7ce8" strokeWidth="4" />
      <circle cx="13" cy="23" r="5.500" fill="#2f7ce8" /><path d="M13 19l3 7-3-1.500L10 26z" fill="#fff" />
      <circle cx="31" cy="29" r="9" fill="#f3f3f3" stroke="#ddd" />
      <circle cx="31" cy="29" r="5.500" fill="none" stroke="#3b6b8e" strokeWidth=".8" />
      <text x="31" y="31.500" fontSize="6.500" textAnchor="middle" fontWeight="700" fontFamily="Inter" fill="#444">3D</text>
    </g>
  ),
  Photos: (
    <>
      <circle cx="20" cy="20" r="20" fill="#f4f4f2" />
      {petals.map((c, i) => (
        <rect key={c} x="15.500" y="3.500" width="9" height="15.500" rx="4.500" fill={c} opacity=".85" transform={`rotate(${i * 45} 20 20)`} />
      ))}
    </>
  ),
  Messages: (
    <>
      <path d="M20 2c11 0 20 7 20 16S31 34 20 34c-2 0-4 0-6-1-1 2-4 4-7 4 2-2 2-4 2-6C3 28 0 23 0 18 0 9 9 2 20 2z" fill="url(#gMsg)" />
      <path d="M27 18c7 0 12 4 12 9 0 3-1 5-3 7 0 2 0 3 1 4-2 0-4-1-5-2-9 2-17-3-17-9 0-5 5-9 12-9z" fill="#fff" />
      <circle cx="21" cy="28" r="2" fill="#2b6fb5" /><circle cx="27" cy="28" r="2" fill="#2b6fb5" /><circle cx="33" cy="28" r="2" fill="#2b6fb5" />
    </>
  ),
  FaceTime: (
    <>
      <rect x="0" y="3" width="36" height="32" rx="4" fill="url(#gGreen)" />
      <rect x="5" y="11" width="18" height="15" rx="3" fill="#fff" /><path d="M24 17l6-5v13l-6-4z" fill="#fff" />
      <circle cx="30" cy="27" r="10" fill="#fafafa" />
      <path d="M25 22c-1 4 4 10 9 10l2-2-3-3-2 1c-1-1-2-2-3-4l1-1-2-3z" fill="#23b93d" />
    </>
  ),
  iTunes: (
    <>
      <circle cx="20" cy="20" r="18.500" fill="#fbfbfd" stroke="url(#gTunes)" strokeWidth="3" />
      <path d="M15 10l14-3v19a4.500 4 0 1 1-3-4V13l-8 2v14a4.500 4 0 1 1-3-4z" fill="url(#gTunes)" />
    </>
  ),
  Safari: (
    <>
      <circle cx="20" cy="20" r="20" fill="#eceff1" /><circle cx="20" cy="20" r="17.500" fill="url(#gSafari)" />
      <circle cx="20" cy="20" r="15.500" fill="none" stroke="#cdeeff" strokeWidth="1.500" strokeDasharray=".8 1.800" />
      <path d="M33 7L18 17l5 5z" fill="#f0323c" /><path d="M8 32l15-10-5-5z" fill="#f4f4f4" />
    </>
  ),
  "App Store": (
    <>
      <circle cx="20" cy="20" r="20" fill="#eef4f8" /><circle cx="20" cy="20" r="18.500" fill="url(#gStore)" />
      <path d="M22 8L11 27M18 8l12 21M7 24h17M29 24h5" stroke="#fff" strokeWidth="3.200" strokeLinecap="round" fill="none" />
    </>
  ),
  Settings: (
    <>
      <rect x="0" y="2" width="40" height="37" rx="1" fill="url(#gGray)" />
      <circle cx="20" cy="20.500" r="16" fill="#2c2c2c" />
      <circle cx="20" cy="20.500" r="12.500" fill="none" stroke="#8d8d8d" strokeWidth="3" strokeDasharray="1.800 1.400" />
      <circle cx="20" cy="20.500" r="10.500" fill="#555" stroke="#a5a5a5" strokeWidth="2" />
      <path d="M20 20.500h10M20 20.500l-5-9M20 20.500l-5 9" stroke="#b5b5b5" strokeWidth="2.500" />
      <circle cx="20" cy="20.500" r="3" fill="#333" stroke="#b5b5b5" />
    </>
  ),
  Smadav: (
    <>
      <circle cx="20" cy="20" r="16" fill="#f4f4f4" />
      <path d="M32 2L14 13l-2 7 10 1-14 17 18-12 3-8-9-2z" fill="#e3202c" />
    </>
  ),
  Kitematic: (
    <>
      <circle cx="20" cy="20" r="20" fill="#dcebf5" /><circle cx="20" cy="20" r="18" fill="url(#gStore)" />
      <path d="M9 12h4v7l5-7h4l-5 8 5 9h-4l-5-7v7H9z" fill="#fff" />
      <path d="M31 12v17h-7l3-4-3-5 4-8z" fill="#fff" />
      <path d="M25 12l3 5-3 4-3-4z" fill="#1f7df2" />
    </>
  ),
  Terminal: (
    <>
      <rect x="1" y="3" width="38" height="34" rx="1.500" fill="#222" stroke="#b9b9b9" strokeWidth="1.500" />
      <text x="5" y="15" fontSize="10" fontWeight="700" fontFamily="Liberation Mono" fill="#fff">&gt;_</text>
    </>
  ),
  Firefox: (
    <>
      <circle cx="20" cy="20" r="14" fill="#2060e0" />
      <path d="M3 8c0 2 1 3 2 4 2-1 4-2 6-2 1-2 3-4 5-5 0 3 0 5 2 6l3 1c-1 3-4 3-4 5-1 3 0 4-2 5 1 5 6 7 10 5 5-2 7-7 6-12-1-4-6-7-3-15 2 5 10 9 11 20 0 11-8 20-19 20S0 33 0 22C0 16 1 11 3 8z" fill="url(#gFlame)" />
    </>
  ),
  WhatsApp: (
    <>
      <path d="M20 0c11 0 20 9 20 20s-9 20-20 20c-3 0-6-1-9-2L0 40l3-10c-2-3-3-6-3-10C0 9 9 0 20 0z" fill="#f7f7f5" />
      <path d="M20 3.500A16.500 16.500 0 1 1 12 34.500l-7 2 2-7A16.500 16.500 0 0 1 20 3.500z" fill="url(#gGreen)" />
      <path d="M20 3.500A16.500 16.500 0 1 1 12 34.500l-7 2 2-7A16.500 16.500 0 0 1 20 3.500z" fill="#2fa344" opacity=".5" />
      <path d="M13 10c-2 1-3 4-2 7 3 7 8 12 15 13 3 0 5-2 5-5l-5-3-3 3c-3-1-6-4-7-7l2-3-2-5z" fill="#fff" />
    </>
  ),
  "VS Code": (
    <>
      <path d="M25 5l12 6v21l-11 7z" fill="#1e8ad2" />
      <path d="M37 11l3 2v19l-8 4-6 3 8-9z" fill="#36a4ec" />
      <path d="M2 5l27-4 2 34-26 5z" fill="#292c30" />
      <path d="M8 15l16 14M8 25l16-15M24 10v19" stroke="#3196dc" strokeWidth="2.600" fill="none" />
    </>
  ),
  Navicat: (
    <>
      <ellipse cx="21" cy="27" rx="17" ry="13" fill="url(#gGold)" />
      <path d="M20 1c4 3 3 8-1 11-5 2-10 5-13 9-9-1-7-11-2-15 5-5 11-6 16-5z" fill="url(#gGold)" />
      <path d="M30 3c8 3 13 13 9 20-5-1-8-5-12-8 0-4 1-8 3-12z" fill="url(#gGold)" />
      <path d="M6 20c3-4 9-7 15-7s12 2 16 8" fill="none" stroke="#41666b" strokeWidth="1.500" />
    </>
  ),
  Word: (
    <>
      <path d="M19 6h20v29H19z" fill="#fff" />
      <path d="M23 10h13M23 14h13M23 18h13M23 22h13M23 26h13M23 30h13" stroke="#222" strokeWidth="1.600" />
      <path d="M0 5l23-4v38L0 36z" fill="url(#gWord)" />
      <text x="3" y="26" fontSize="16" fontWeight="600" fontFamily="Inter" fill="#fff">W</text>
    </>
  ),
  "Recent document": (
    <>
      <path d="M4 0h16l15 15v26H4z" fill="#f8f8f8" /><path d="M20 0c2 5 0 9 4 12 3 1 7 0 11 3z" fill="#d4d4d4" />
      <path d="M9 6h9M9 9h10M9 12h12M9 18h18M9 21h14M9 24h18M9 27h12" stroke="#c9c9c9" />
      <text x="20" y="38" fontSize="6.500" textAnchor="middle" fontFamily="Inter" fill="#888">DOCX</text>
    </>
  ),
  Folder: (
    <>
      <path d="M0 6c0-1 1-2 2-2h11l3 4h22c1 0 2 1 2 2v24c0 1-1 2-2 2H2c-1 0-2-1-2-2z" fill="#6cc4ee" />
      <path d="M0 11h40v23c0 1-1 2-2 2H2c-1 0-2-1-2-2z" fill="url(#gFolder)" />
      <path d="M12 15l7-1v8l-8 1zM21 14l8-2-2 9-7 1zM11 24l8-1-1 8-8 0zM20 23l8-2-2 9-7 1z" fill="#5bb4e0" />
    </>
  ),
  Trash: (
    <>
      <path d="M5 6l30 0-4 32c-4 3-18 3-22 0z" fill="url(#gBin)" />
      <path d="M5 6c3-4 6-6 9-4l4-2 5 3 5-2 7 5c-6 3-24 3-30 0z" fill="#d7dde0" />
      <path d="M12 4l4 2M22 2l3 4" stroke="#4a5558" strokeWidth="2" />
      <path d="M14 12l-1 22M21 14l1 20M27 12l-3 20" stroke="#888c8f" strokeWidth="1.200" opacity=".6" />
      <ellipse cx="20" cy="6.500" rx="15" ry="3" fill="none" stroke="#222" strokeWidth="1.500" />
    </>
  ),
};

const dockItems = [
  { name: "Finder", open: true }, { name: "Siri" }, { name: "Launchpad" }, { name: "Mail" }, { name: "Contacts" },
  { name: "Calendar" }, { name: "Notes" }, { name: "Reminders" }, { name: "Maps" }, { name: "Photos" },
  { name: "Messages" }, { name: "FaceTime" }, { name: "iTunes" }, { name: "Safari", open: true },
  { name: "App Store", badge: "5" }, { name: "Settings", badge: "1" }, { name: "Smadav" }, null,
  { name: "Kitematic", open: true }, { name: "Terminal", open: true }, { name: "Firefox", open: true },
  { name: "WhatsApp", open: true, badge: "13" }, { name: "VS Code", open: true }, { name: "Navicat", open: true },
  { name: "Word", open: true }, null, { name: "Recent document" }, { name: "Folder" }, { name: "Trash" },
];

function DockIcon({ name }) {
  if (name === "Siri") return <SiriDark className="h-10 w-10" />;
  return <svg viewBox="0 0 40 40" className="h-10 w-10 overflow-visible">{art[name]}</svg>;
}

function Dock() {
  return (
    <div className="flex h-16 shrink-0 justify-center bg-gradient-to-b from-[#2f4a4e] to-[#6fb0ba]">
      <Gradients />
      <nav aria-label="Dock" className="flex h-16 rounded-t-lg border-x-2 border-t-2 border-[#567c81] bg-[#41666b] pt-1">
        {dockItems.map((d, i) =>
          d ? (
            <button type="button" key={i} aria-label={d.name} className="relative flex w-[50px] flex-col items-center">
              <DockIcon name={d.name} />
              {d.open && <span className="mt-2 h-1.5 w-1.5 rounded-full bg-[#bfe6ea]" />}
              {d.badge && (
                <span className="absolute -top-1 right-0 flex h-[18px] w-[18px] items-center justify-center rounded-full bg-[#ec3e3e] text-[11px] leading-3 text-white">{d.badge}</span>
              )}
            </button>
          ) : (
            <div key={i} className="mx-[11px] mt-2 h-9 w-0.5 bg-[#6f9499]" />
          )
        )}
      </nav>
    </div>
  );
}

export default function App() {
  return (
    <div className={`flex h-screen flex-col overflow-hidden bg-[#2b2b2b] ${UI}`}>
      <MenuBar />
      <BackgroundWindows />
      <div className="flex min-h-0 flex-1 flex-col bg-[#2f4a4e]">
        <div className="flex min-h-0 flex-1 flex-col overflow-hidden rounded-b-lg">
          <div className="flex h-[100px] shrink-0 flex-col border-t-2 border-[#8fa9cf] bg-gradient-to-b from-[#3f65a0] to-[#2b5797]">
            <TitleBar />
            <TabRow />
          </div>
          <Ribbon />
          <Document />
          <StatusBar />
        </div>
      </div>
      <Dock />
    </div>
  );
}
